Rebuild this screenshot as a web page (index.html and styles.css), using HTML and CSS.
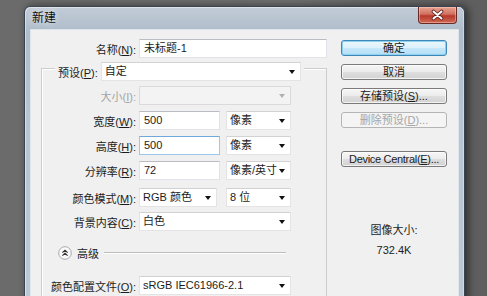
FILE: index.html
```html
<!DOCTYPE html>
<html lang="zh-CN">
<head>
<meta charset="utf-8">
<title>新建</title>
<link rel="stylesheet" href="styles.css">
</head>
<body>
<div class="window">
  <div class="titlebar">
    <span class="title">新建</span>
    <div class="close">
      <svg width="15" height="12" viewBox="0 0 15 12"><path d="M3.5 2.5 L11.5 9.5 M11.5 2.5 L3.5 9.5" stroke="#5a1d18" stroke-width="3.6" stroke-linecap="round"/><path d="M3.5 2.5 L11.5 9.5 M11.5 2.5 L3.5 9.5" stroke="#ffffff" stroke-width="2" stroke-linecap="round"/></svg>
    </div>
  </div>
  <div class="client">
    <div class="main">
      <div class="row name-row">
        <span class="lbl">名称(<u>N</u>):</span>
        <div class="field w-name">未标题-1</div>
      </div>
      <div class="group">
        <div class="row preset-row">
          <span class="lbl">预设(<u>P</u>):</span>
          <div class="select w-preset">自定<i class="arrow"></i></div>
        </div>
        <div class="row r-size">
          <span class="lbl disabled">大小(<u>I</u>):</span>
          <div class="select w-full is-disabled"><i class="arrow"></i></div>
        </div>
        <div class="row r-std">
          <span class="lbl">宽度(<u>W</u>):</span>
          <div class="field w-num">500</div>
          <div class="select w-unit">像素<i class="arrow"></i></div>
        </div>
        <div class="row r-std">
          <span class="lbl">高度(<u>H</u>):</span>
          <div class="field w-num is-focus">500</div>
          <div class="select w-unit">像素<i class="arrow"></i></div>
        </div>
        <div class="row r-std">
          <span class="lbl">分辨率(<u>R</u>):</span>
          <div class="field w-num">72</div>
          <div class="select w-unit">像素/英寸<i class="arrow"></i></div>
        </div>
        <div class="row r-mode">
          <span class="lbl">颜色模式(<u>M</u>):</span>
          <div class="select w-mode">RGB 颜色<i class="arrow"></i></div>
          <div class="select w-unit">8 位<i class="arrow"></i></div>
        </div>
        <div class="row r-bg">
          <span class="lbl">背景内容(<u>C</u>):</span>
          <div class="select w-full">白色<i class="arrow"></i></div>
        </div>
        <div class="adv">
          <svg class="adv-icon" width="14" height="14" viewBox="0 0 14 14"><circle cx="7" cy="7" r="6.3" fill="#fafafa" stroke="#a9a9a9" stroke-width="1"/><path d="M4.4 6.6 L7 4.2 L9.6 6.6 M4.4 9.6 L7 7.2 L9.6 9.6" fill="none" stroke="#333" stroke-width="1.2"/></svg>
          <span class="adv-text">高级</span>
          <span class="adv-line"></span>
        </div>
        <div class="row r-profile">
          <span class="lbl">颜色配置文件(<u>O</u>):</span>
          <div class="select w-full">sRGB IEC61966-2.1<i class="arrow"></i></div>
        </div>
      </div>
    </div>
    <div class="side">
      <div class="btn is-default">确定</div>
      <div class="btn">取消</div>
      <div class="btn">存储预设(<u>S</u>)...</div>
      <div class="btn is-disabled">删除预设(<u>D</u>)...</div>
      <div class="btn btn-dc">Device Central(<u>E</u>)...</div>
      <div class="info">图像大小:</div>
      <div class="info info-val">732.4K</div>
    </div>
  </div>
</div>
</body>
</html>
```

FILE: styles.css
```css
* { box-sizing: border-box; }
html, body { margin: 0; height: 100%; }
body {
  background: linear-gradient(to right, #6b6b6b, #717171 60%, #5e5e5e);
  overflow: hidden;
  font-family: "Liberation Sans", "Noto Sans CJK SC", sans-serif;
  font-size: 11px;
  color: #1c1c1c;
}
u { text-decoration: underline; text-underline-offset: 1px; }

.window {
  margin: 6px 0 0 24px;
  width: 441px;
  height: 310px;
  border: 1px solid #3a4350;
  border-bottom: none;
  border-radius: 6px 6px 0 0;
  background: linear-gradient(#c2ccd7, #afbcca 24px, #b7c4d1 120px, #bcc8d4);
  padding: 0 6px;
  box-shadow: 3px 0 9px rgba(0,0,0,.55), inset 1px 1px 0 rgba(255,255,255,.45), inset -1px 0 0 rgba(255,255,255,.35);
  display: flex;
  flex-direction: column;
}

.titlebar {
  height: 23px;
  display: flex;
  justify-content: space-between;
  align-items: flex-start;
  flex: none;
}
.title {
  padding-left: 1px;
  line-height: 23px;
  font-size: 12px;
  color: #111;
  text-shadow: 0 0 6px rgba(255,255,255,.9);
}
.close {
  width: 39px;
  height: 17px;
  margin-right: 1px;
  border: 1px solid #6a2b26;
  border-top: none;
  border-radius: 0 0 4px 4px;
  background: linear-gradient(#e8a493, #d0705f 45%, #b8392b 55%, #cf6a55);
  display: flex;
  align-items: center;
  justify-content: center;
  box-shadow: inset 0 0 0 1px rgba(255,210,200,.45);
}

.client {
  flex: 1;
  background: #f0f0f0;
  display: flex;
  padding-top: 9px;
  box-shadow: 0 0 0 1px rgba(240,245,250,.7);
}
.main { width: 310px; flex: none; }
.side { width: 106px; flex: none; padding-top: 1px; }

.row {
  display: flex;
  align-items: center;
  gap: 3px;
  height: 19px;
}
.lbl { text-align: right; white-space: nowrap; }
.name-row .lbl { width: 105px; }
.group .lbl { width: 94px; }
.lbl.disabled { color: #a3a3a3; }

.field, .select {
  height: 19px;
  line-height: 17px;
  padding-left: 4px;
  background: #fff;
  white-space: nowrap;
  position: relative;
  flex: none;
}
.select { padding-left: 3px; }
.field {
  border: 1px solid #e0e3e8;
  border-top-color: #b9bcc2;
}
.field.is-focus {
  border-color: #9cc7ec;
  border-top-color: #6fa9dc;
}
.select {
  border: 1px solid #e4e4e4;
  border-top-color: #d2d2d2;
}
.select.is-disabled {
  background: #f3f3f3;
  border-color: #dadada;
}
.arrow {
  position: absolute;
  right: 5px;
  top: 7px;
  width: 0;
  height: 0;
  border-left: 3px solid transparent;
  border-right: 3px solid transparent;
  border-top: 4px solid #111;
}
.is-disabled .arrow { border-top-color: #b0b0b0; }

.w-name { width: 188px; }
.w-preset { width: 200px; }
.w-full { width: 152px; }
.w-num { width: 81px; }
.w-unit { width: 65px; margin-left: 3px; }
.w-mode { width: 78px; }
.r-mode .w-unit { margin-left: 6px; }

.group {
  margin: 10px 0 0 10px;
  width: 286px;
  height: 260px;
  border: 1px solid #cdcdcd;
  border-bottom: none;
  box-shadow: inset 1px 1px 0 #fff;
}
.preset-row {
  margin: -7px 0 0 13px;
  padding: 0 3px;
  width: fit-content;
  background: #f0f0f0;
}
.preset-row .lbl { width: auto; }
.r-size { margin-top: 5px; }
.r-std { margin-top: 6px; }
.r-mode { margin-top: 8px; }
.r-bg { margin-top: 5px; }

.adv {
  display: flex;
  align-items: center;
  height: 14px;
  margin: 15px 0 0 16px;
}
.adv-icon { flex: none; }
.adv-text { margin-left: 5px; white-space: nowrap; }
.adv-line {
  width: 182px;
  margin-left: 5px;
  border-top: 1px solid #bdbdbd;
  border-bottom: 1px solid #fff;
}
.r-profile { margin-top: 16px; }

.btn {
  height: 16px;
  line-height: 14px;
  margin-bottom: 8px;
  text-align: center;
  border: 1px solid #7a7a7a;
  border-radius: 3px;
  background: linear-gradient(#f6f6f6, #ececec 48%, #dedede 52%, #d2d2d2);
  box-shadow: inset 0 0 0 1px rgba(255,255,255,.7);
  white-space: nowrap;
}
.btn.is-default {
  border-color: #3d86b8;
  background: linear-gradient(#ecf7fd, #ddf1fc 48%, #c6e8fb 52%, #b2ddf5);
  box-shadow: inset 0 0 0 1px #8fd2f0;
}
.btn.is-disabled {
  border-color: #b5b5b5;
  background: #f4f4f4;
  color: #a6a6a6;
  box-shadow: none;
}
.btn-dc { margin-top: 23px; letter-spacing: -0.3px; }
.info {
  text-align: center;
  line-height: 16px;
  margin-top: 55px;
}
.info-val { margin-top: 4px; }
```
